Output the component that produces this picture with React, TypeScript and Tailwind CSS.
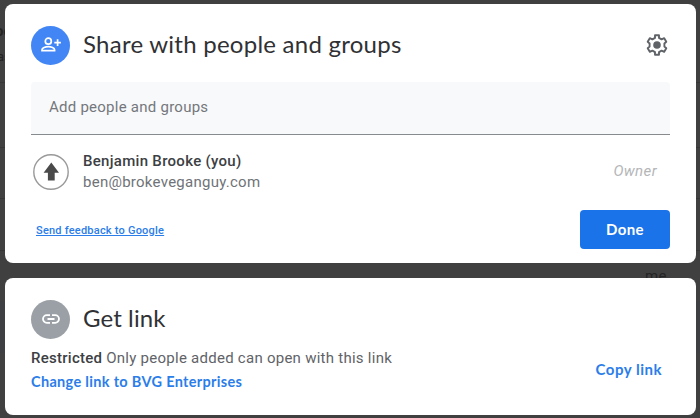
function PersonAddIcon() {
  return (
    <svg width="22" height="18" viewBox="0 0 22 18" fill="none" stroke="#fff" strokeWidth="1.7">
      <circle cx="8.3" cy="5.2" r="3" />
      <path d="M2 14.6v-.9c0-1.8 3.5-3 6.3-3s6.3 1.2 6.3 3v.9z" />
      <path d="M17.6 3.3v6.6M14.3 6.6h6.6" />
    </svg>
  );
}

function GearIcon() {
  return (
    <svg width="24" height="24" viewBox="0 0 24 24" fill="none">
      <path
        d="M10 2.2h4v2.7l2.6 1.5 2.6-1.2 2.1 3.6-1.9 1.7v3l1.9 1.7-2.1 3.6-2.6-1.2-2.6 1.5v2.7h-4v-2.7l-2.6-1.5-2.6 1.2-2.1-3.6 1.9-1.7v-3l-1.9-1.7 2.1-3.6 2.6 1.2 2.6-1.5z"
        stroke="#5f6368"
        strokeWidth="1.9"
        strokeLinejoin="round"
      />
      <circle cx="12" cy="12" r="3.8" fill="#5f6368" />
    </svg>
  );
}

function LinkIcon() {
  return (
    <svg width="18" height="10" viewBox="0 0 18 10" fill="none" stroke="#fff" strokeWidth="1.8">
      <path d="M8 1.2H4.8a3.8 3.8 0 0 0 0 7.6H8M10 1.2h3.2a3.8 3.8 0 0 1 0 7.6H10M5.5 5h7" />
    </svg>
  );
}

function UpArrow() {
  return (
    <svg width="36" height="36" viewBox="0 0 36 36">
      <circle cx="18" cy="18" r="17.2" fill="none" stroke="#999" strokeWidth="1.4" />
      <path d="M18.3 8.5 26 18.7H21.7V26.4H14.9V18.7H10.6z" fill="#4a4a4a" />
    </svg>
  );
}

function Backdrop() {
  return (
    <div className="absolute inset-0 text-[#242424]">
      <span className="absolute left-[645px] top-[266px] text-[15px] leading-[20px] tracking-[0.3px]">me</span>
      <span className="absolute left-[-5px] top-[21px] text-[15px] font-bold leading-[20px]">oc</span>
      <span className="absolute left-[-3px] top-[47px] text-[13px] leading-[20px]">as</span>
      <div className="absolute left-0 top-[82px] h-px w-full bg-[#363636]" />
      <div className="absolute left-0 top-[147px] h-px w-full bg-[#363636]" />
      <div className="absolute left-0 top-[198px] h-px w-full bg-[#363636]" />
      <div className="absolute left-0 top-[250px] h-px w-full bg-[#363636]" />
      <div className="absolute left-0 top-[301px] h-[52px] w-full bg-[#3e3f43]" />
    </div>
  );
}

export default function App() {
  return (
    <div className="relative h-[418px] w-[700px] overflow-hidden bg-[#404040] font-['Roboto',sans-serif]">
      <Backdrop />
      <main className="relative flex flex-col gap-[15px] pl-[5px] pr-[4px] pt-[4px] whitespace-nowrap">
        <section className="h-[259px] rounded-[8px] bg-white px-[26px] pt-[21px]">
          <header className="flex h-[40px] items-center">
            <div className="flex size-[39px] items-center justify-center rounded-full bg-[#4285f4]">
              <PersonAddIcon />
            </div>
            <h1 className="ml-[13px] flex-1 pb-[2px] font-['Lato',sans-serif] text-[24px] leading-[32px] tracking-[0.25px] text-[#303134]">
              Share with people and groups
            </h1>
            <button className="mr-[1px]" aria-label="Settings">
              <GearIcon />
            </button>
          </header>
          <div className="mt-[17px] flex h-[53px] items-center rounded-t-[4px] border-b border-[#888b8e] bg-[#f8f9fb] pb-[2px] pl-[18px] text-[15px] tracking-[0.25px] text-[#74777b]">
            Add people and groups
          </div>
          <div className="mt-[16px] flex h-[43px] items-center">
            <div className="ml-[1.5px] pb-[2px]">
              <UpArrow />
            </div>
            <div className="ml-[14.5px] flex-1 pb-[2px]">
              <div className="text-[15px] font-medium leading-[21px] tracking-[0.3px] text-[#3c4043]">Benjamin Brooke (you)</div>
              <div className="text-[15px] leading-[21px] tracking-[0.26px] text-[#6f7377]">ben@brokeveganguy.com</div>
            </div>
            <span className="mr-[13px] pb-[2px] text-[15px] italic tracking-[0.4px] text-[#b4b6b8]">Owner</span>
          </div>
          <footer className="mt-[16px] flex h-[39px] items-center justify-between">
            <a className="ml-[5px] pt-[3px] text-[11px] font-medium tracking-[0.22px] text-[#2b7de9] underline">Send feedback to Google</a>
            <button className="h-[39px] w-[90px] rounded-[4px] bg-[#1a73e8] font-['Lato',sans-serif] text-[15px] font-bold tracking-[0.4px] text-white">
              Done
            </button>
          </footer>
        </section>
        <section className="h-[137px] rounded-[8px] bg-white px-[26px] pt-[21px]">
          <header className="flex h-[40px] items-center">
            <div className="flex size-[39px] items-center justify-center rounded-full bg-[#9aa0a6]">
              <LinkIcon />
            </div>
            <h2 className="ml-[13px] pb-[3px] font-['Lato',sans-serif] text-[24px] leading-[32px] tracking-[0.1px] text-[#303134]">Get link</h2>
          </header>
          <div className="mt-[7px] flex items-center justify-between">
            <div>
              <p className="text-[15px] leading-[24px] tracking-[0.26px] text-[#5f6368]">
                <span className="font-medium text-[#3c4043]">Restricted</span> Only people added can open with this link
              </p>
              <a className="block font-['Lato',sans-serif] text-[14.5px] font-bold leading-[24px] tracking-[0.32px] text-[#2b7de9]">Change link to BVG Enterprises</a>
            </div>
            <button className="mr-[8px] pb-[2px] font-['Lato',sans-serif] text-[15px] font-bold tracking-[0.5px] text-[#2b7de9]">Copy link</button>
          </div>
        </section>
      </main>
    </div>
  );
}
